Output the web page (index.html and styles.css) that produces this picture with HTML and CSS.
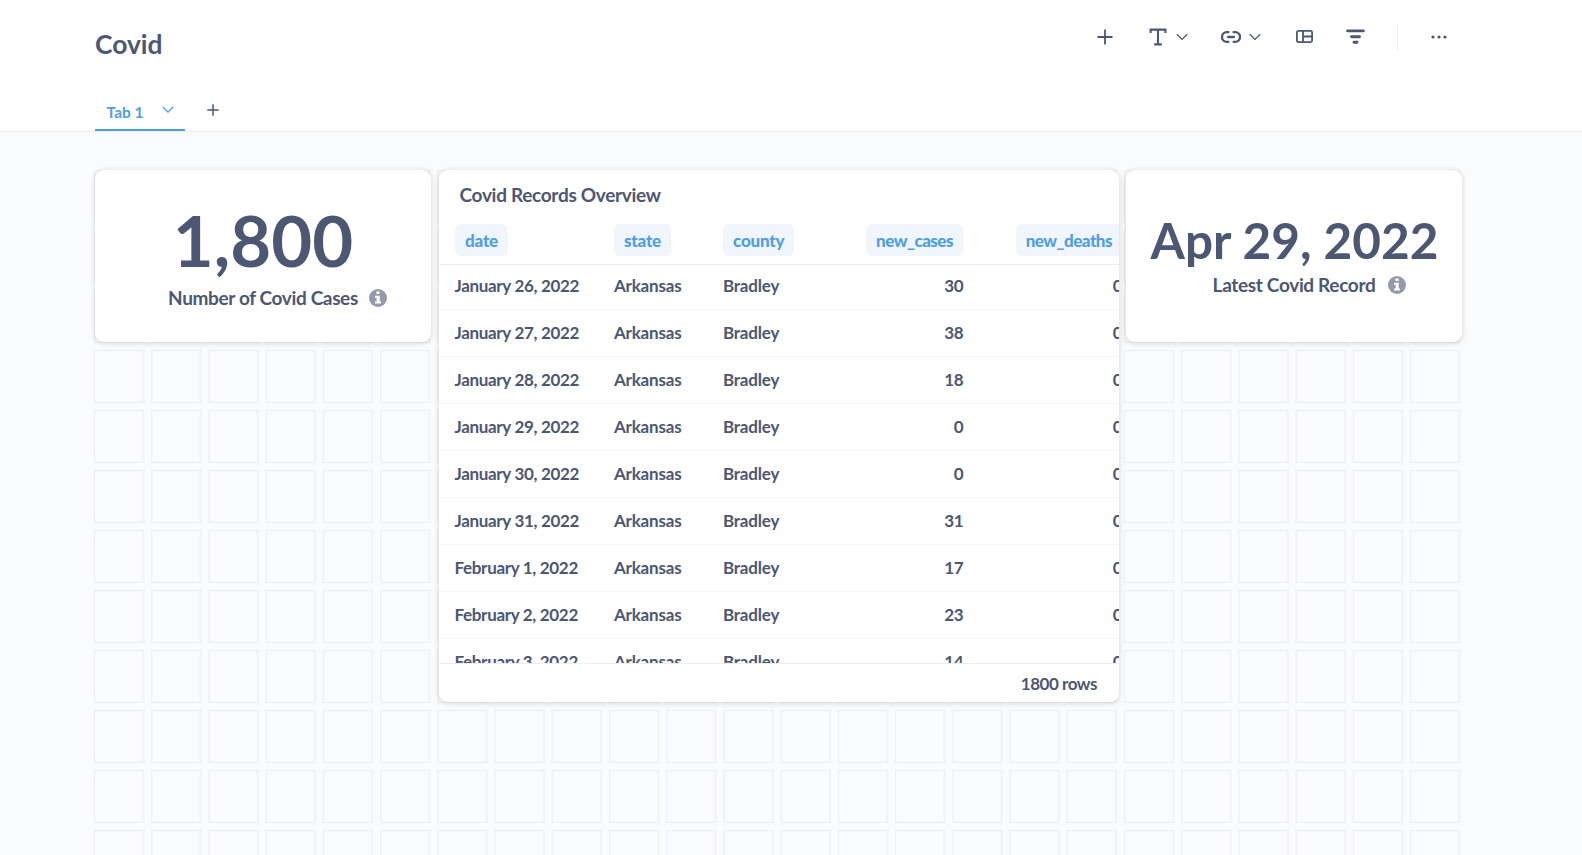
FILE: index.html
```html
<!DOCTYPE html>
<html lang="en">
<head>
<meta charset="utf-8">
<title>Covid</title>
<link rel="stylesheet" href="styles.css">
</head>
<body>
<header class="header">
  <div class="title-row">
    <h1 class="title">Covid</h1>
    <div class="toolbar">
      <svg class="tool add" width="16" height="16" viewBox="0 0 16 16"><path d="M8 .5v15M.5 8h15"/></svg>
      <svg class="tool text" width="18" height="18" viewBox="0 0 18 18"><path d="M1.6 5V1.6h14.8V5M9 1.6v14.8M5.2 16.4h7.6"/></svg>
      <svg class="tool chev c1" width="12" height="8" viewBox="0 0 12 8"><path d="M.8 1.2L6 6.4l5.2-5.2"/></svg>
      <svg class="tool link" width="20" height="12" viewBox="0 0 20 12"><path d="M7.4 1.2H5.8a4.8 4.8 0 0 0 0 9.6h1.6M12.6 1.2h1.6a4.8 4.8 0 0 1 0 9.6h-1.6M7 6h6"/></svg>
      <svg class="tool chev c2" width="12" height="8" viewBox="0 0 12 8"><path d="M.8 1.2L6 6.4l5.2-5.2"/></svg>
      <svg class="tool section" width="17" height="13" viewBox="0 0 17 13"><rect x=".9" y=".9" width="15.2" height="11.2" rx="1.5"/><path d="M7 1v11M7 6.5h9"/></svg>
      <svg class="tool filter" width="19" height="15" viewBox="0 0 19 15"><path d="M1.6 1.9h15.8M5.5 7.7h8M8 13.2h3"/></svg>
      <span class="divider"></span>
      <svg class="tool more" width="16" height="4" viewBox="0 0 16 4"><circle cx="2" cy="2" r="1.6"/><circle cx="8" cy="2" r="1.6"/><circle cx="14" cy="2" r="1.6"/></svg>
    </div>
  </div>
  <nav class="tabs">
    <div class="tab"><span>Tab 1</span><svg class="tab-chev" width="12" height="8" viewBox="0 0 12 8"><path d="M.8 1l5.2 5.2L11.2 1"/></svg></div>
    <svg class="tab-add" width="12" height="12" viewBox="0 0 12 12"><path d="M6 .3v11.4M.3 6h11.4"/></svg>
  </nav>
</header>
<main class="dashboard">
  <svg class="grid-lines" width="1367" height="685">
    <defs><pattern id="cell" width="57.22" height="60" patternUnits="userSpaceOnUse"><rect x=".5" y=".5" width="49" height="51.9"/></pattern></defs>
    <path fill="url(#cell)" d="M0 0h1367v685H0z"/>
  </svg>
  <div class="cards">
    <section class="card scalar">
      <div class="value large">1,800</div>
      <div class="caption"><span>Number of Covid Cases</span><svg class="info" width="18" height="18" viewBox="0 0 18 18"><circle cx="9" cy="9" r="9"/><path d="M7.4 2.4h3.2v2.7H7.4zM6 6.8h4.7v5.7H12v2H6v-2h1.7V8.7H6z"/></svg></div>
    </section>
    <section class="card table-card">
      <h2 class="card-title">Covid Records Overview</h2>
      <div class="row head"><span><b>date</b></span><span><b>state</b></span><span><b>county</b></span><span class="num"><b>new_cases</b></span><span class="num"><b>new_deaths</b></span></div>
      <div class="rows">
        <div class="row"><span class="day">January 26, 2022</span><span>Arkansas</span><span>Bradley</span><span class="num">30</span><span class="num">0</span></div>
        <div class="row"><span class="day">January 27, 2022</span><span>Arkansas</span><span>Bradley</span><span class="num">38</span><span class="num">0</span></div>
        <div class="row"><span class="day">January 28, 2022</span><span>Arkansas</span><span>Bradley</span><span class="num">18</span><span class="num">0</span></div>
        <div class="row"><span class="day">January 29, 2022</span><span>Arkansas</span><span>Bradley</span><span class="num">0</span><span class="num">0</span></div>
        <div class="row"><span class="day">January 30, 2022</span><span>Arkansas</span><span>Bradley</span><span class="num">0</span><span class="num">0</span></div>
        <div class="row"><span class="day">January 31, 2022</span><span>Arkansas</span><span>Bradley</span><span class="num">31</span><span class="num">0</span></div>
        <div class="row"><span class="day">February 1, 2022</span><span>Arkansas</span><span>Bradley</span><span class="num">17</span><span class="num">0</span></div>
        <div class="row"><span class="day">February 2, 2022</span><span>Arkansas</span><span>Bradley</span><span class="num">23</span><span class="num">0</span></div>
        <div class="row"><span class="day">February 3, 2022</span><span>Arkansas</span><span>Bradley</span><span class="num">14</span><span class="num">0</span></div>
      </div>
      <footer class="table-footer">1800 rows</footer>
    </section>
    <section class="card scalar">
      <div class="value medium">Apr 29, 2022</div>
      <div class="caption second"><span>Latest Covid Record</span><svg class="info" width="18" height="18" viewBox="0 0 18 18"><circle cx="9" cy="9" r="9"/><path d="M7.4 2.4h3.2v2.7H7.4zM6 6.8h4.7v5.7H12v2H6v-2h1.7V8.7H6z"/></svg></div>
    </section>
  </div>
</main>
</body>
</html>
```
FILE: styles.css
```css
* { box-sizing: border-box; }
body {
  margin: 0;
  height: 855px;
  overflow: hidden;
  background: #fafbfd;
  color: #4c5773;
  font-family: Lato, sans-serif;
  font-weight: 700;
}
svg { display: block; flex: none; }
.header {
  height: 132px;
  background: #fff;
  border-bottom: 1px solid #eeecec;
  padding: 0 119px 0 95px;
  display: flex;
  flex-direction: column;
  justify-content: space-between;
}
.title-row { display: flex; justify-content: space-between; }
.title { margin: 28px 0 0; font-size: 26.4px; line-height: 32px; }
.toolbar { display: flex; align-items: center; height: 26px; margin-top: 24px; }
.tool { fill: none; stroke: #4c5773; stroke-width: 1.8; margin-bottom: 1px; }
.tool.text { margin-left: 36px; stroke-width: 2.1; }
.tool.chev { stroke-width: 1.3; margin-left: 9px; }
.tool.chev.c2 { margin-left: 8px; }
.tool.link { margin-left: 33px; stroke-width: 2.3; stroke-linecap: round; }
.tool.section { margin-left: 35px; }
.tool.filter { margin-left: 33px; stroke-width: 2.9; stroke-linecap: round; }
.divider { width: 1px; height: 26px; background: #eeecec; margin-left: 32px; }
.tool.more { fill: #4c5773; stroke: none; margin-left: 33px; margin-right: 16px; }
.tabs { display: flex; }
.tab {
  width: 90px;
  height: 37px;
  border-bottom: 2px solid #509ee3;
  color: #509ee3;
  font-size: 15.4px;
  line-height: 20px;
  padding: 8px 11px 0 11.6px;
  display: flex;
  justify-content: space-between;
}
.tab-chev { fill: none; stroke: #509ee3; stroke-width: 1.3; margin-top: 4px; }
.tab-add { margin: 10px 0 0 22px; stroke: #4c5773; stroke-width: 1.5; }
.dashboard { padding: 38px 0 0 94px; display: grid; }
.grid-lines, .cards { grid-area: 1 / 1; }
#cell rect { fill: none; stroke: #eeedef; stroke-width: 1.2; }
.cards { display: flex; align-items: flex-start; gap: 8px; padding-left: 1px; z-index: 1; }
.card {
  background: #fff;
  border-radius: 9px;
  box-shadow: 0 1px 5px 1px rgba(0, 0, 0, .12);
  overflow: hidden;
  flex: none;
}
.scalar {
  width: 336px;
  height: 172px;
  display: flex;
  flex-direction: column;
  align-items: center;
}
.value { white-space: nowrap; }
.large { font-size: 70.6px; line-height: 84px; margin-top: 28px; }
.medium { font-size: 49.5px; line-height: 60px; margin-top: 40px; padding-left: 1px; }
.caption {
  display: flex;
  align-items: center;
  gap: 11.5px;
  padding-left: 29.5px;
  font-size: 19px;
  letter-spacing: -.36px;
  line-height: 22px;
  margin-top: 5px;
}
.caption.second { margin-top: 4px; gap: 13px; padding-left: 31px; letter-spacing: -.33px; }
.info circle { fill: #949aab; }
.info path { fill: #fff; }
.table-card { width: 680px; height: 532px; display: flex; flex-direction: column; margin-right: -1px; }
.card-title { margin: 14px 0 0 20.5px; font-size: 19px; letter-spacing: -.3px; line-height: 22px; }
.row {
  display: grid;
  grid-template-columns: 159px 109px 81px 159px 159px;
  padding: 0 0 0 16px;
  height: 47px;
  align-items: center;
  font-size: 17px;
  letter-spacing: -.2px;
  line-height: 20px;
  border-bottom: 1px solid #f6f6f7;
  white-space: nowrap;
}
.day { letter-spacing: -.32px; margin-left: -.5px; }
.num { text-align: right; letter-spacing: -.5px; }
.row.head { height: 41px; margin-top: 18px; border-color: #eeecec; align-items: start; flex: none; }
.head b {
  display: inline-block;
  height: 32px;
  line-height: 33px;
  padding: 0 10px;
  border-radius: 6px;
  background: #f1f6fe;
  color: #509ee3;
}
.rows { flex: 1; min-height: 0; overflow: hidden; }
.rows .row:first-child { height: 45px; padding-bottom: 2px; }
.table-footer {
  height: 39px;
  border-top: 1px solid #eeecec;
  padding-right: 22px;
  text-align: right;
  font-size: 17px;
  letter-spacing: -.45px;
  line-height: 39px;
}
```
